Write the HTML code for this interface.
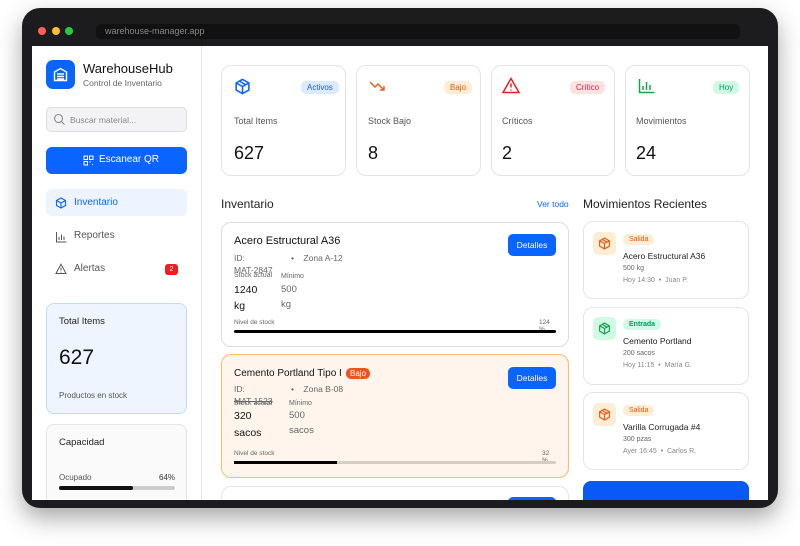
<!DOCTYPE html>
<html><head><meta charset="utf-8"><style>
*{box-sizing:border-box;margin:0;padding:0}
body{width:800px;height:546px;background:#fff;font-family:"Liberation Sans",sans-serif;position:relative;overflow:hidden;color:#111}
.a{position:absolute}
.frame{left:22px;top:8px;width:756px;height:500px;background:#1c1c1e;border-radius:18px;box-shadow:0 10px 24px rgba(0,0,0,.35)}
.screen{left:32px;top:46px;width:736px;height:454px;background:#fff;overflow:hidden}
.card{border:1px solid #e5e5e5;border-radius:10px;background:#fff}
.badge{font-size:8px;padding:2px 6px;border-radius:5px}
.lab{font-size:9px;color:#555}
.sm{font-size:8px;color:#666}
</style></head><body>
<div class="a frame"></div>
<div class="a" style="left:38px;top:27px;width:8px;height:8px;border-radius:50%;background:#ff5f57"></div>
<div class="a" style="left:52px;top:27px;width:8px;height:8px;border-radius:50%;background:#febc2e"></div>
<div class="a" style="left:65px;top:27px;width:8px;height:8px;border-radius:50%;background:#28c840"></div>
<div class="a" style="left:96px;top:24px;width:644px;height:15px;border-radius:5px;background:#111;color:#888;font-size:9px;padding:2px 9px">warehouse-manager.app</div>
<div class="a screen">
 <div class="a" style="left:0;top:0;width:170px;height:454px;border-right:1px solid #e6e6e6;background:#fff"></div>
 <div class="a" style="left:14px;top:14px;width:29px;height:29px;border-radius:7px;background:#0a64ff">
  <svg width="29" height="29" viewBox="0 0 29 29"><path d="M8.5 12 L14.5 8.5 L20.5 12 V20.5 H8.5Z M11 14h7 M11 16.5h7 M11 19h7" fill="none" stroke="#fff" stroke-width="1.4"/></svg></div>
 <div class="a" style="left:51px;top:15px;font-size:13px;color:#111">WarehouseHub</div>
 <div class="a" style="left:51px;top:32px;font-size:8.5px;color:#666">Control de Inventario</div>
 <div class="a" style="left:14px;top:61px;width:141px;height:25px;border:1px solid #ddd;border-radius:5px;background:#f3f3f5"></div>
 <svg class="a" style="left:21px;top:67px" width="13" height="13" viewBox="0 0 13 13"><circle cx="5.5" cy="5.5" r="4" fill="none" stroke="#888" stroke-width="1.1"/><path d="M8.5 8.5l3 3" stroke="#888" stroke-width="1.1"/></svg>
 <div class="a" style="left:38px;top:69px;font-size:8.5px;color:#888">Buscar material...</div>
 <div class="a" style="left:14px;top:101px;width:141px;height:27px;border-radius:6px;background:#0a64ff"></div>
 <div class="a" style="left:67px;top:108px;color:#fff;font-size:10px">Escanear QR</div>
 <svg class="a" style="left:51px;top:109px" width="11" height="11" viewBox="0 0 11 11" fill="none" stroke="#fff" stroke-width="1"><rect x="1" y="1" width="3.5" height="3.5"/><rect x="6.5" y="1" width="3.5" height="3.5"/><rect x="1" y="6.5" width="3.5" height="3.5"/><path d="M6.5 7h1.5M9 9.5h1"/></svg>
 <div class="a" style="left:14px;top:143px;width:141px;height:27px;border-radius:6px;background:#eef4ff"></div>
 <svg class="a" style="left:23px;top:151px" width="12" height="12" viewBox="0 0 12 12" fill="none" stroke="#0a64ff" stroke-width="1.1"><path d="M6 1l4.5 2.5v5L6 11 1.5 8.5v-5Z M1.5 3.5L6 6l4.5-2.5 M6 6v5"/></svg>
 <div class="a" style="left:42px;top:151px;font-size:10px;color:#0a64ff">Inventario</div>
 <svg class="a" style="left:23px;top:185px" width="12" height="12" viewBox="0 0 12 12" fill="none" stroke="#555" stroke-width="1"><path d="M1.5 1v10h10M4 9V6M6.5 9V3.5M9 9V5.5"/></svg>
 <div class="a" style="left:42px;top:184px;font-size:10px;color:#555">Reportes</div>
 <svg class="a" style="left:23px;top:217px" width="12" height="12" viewBox="0 0 12 12" fill="none" stroke="#555" stroke-width="1"><path d="M6 1.2L11 10.5H1Z M6 4.5v3M6 8.8v.6"/></svg>
 <div class="a" style="left:42px;top:217px;font-size:10px;color:#555">Alertas</div>
 <div class="a" style="left:133px;top:218px;width:13px;height:11px;border-radius:3px;background:#f01e1e;color:#fff;font-size:7px;text-align:center;line-height:11px">2</div>
 <div class="a" style="left:14px;top:257px;width:141px;height:111px;border:1px solid #bcdcff;border-radius:8px;background:#eef5ff"></div>
 <div class="a" style="left:27px;top:270px;font-size:9.5px;color:#222">Total Items</div>
 <div class="a" style="left:27px;top:300px;font-size:21px;color:#111">627</div>
 <div class="a" style="left:27px;top:345px;font-size:8px;color:#555">Productos en stock</div>
 <div class="a" style="left:14px;top:378px;width:141px;height:90px;border:1px solid #e5e5e5;border-radius:8px;background:#fafafa"></div>
 <div class="a" style="left:27px;top:391px;font-size:9.5px;color:#222">Capacidad</div>
 <div class="a" style="left:27px;top:427px;font-size:8px;color:#555">Ocupado</div>
 <div class="a" style="left:127px;top:427px;font-size:8px;color:#333">64%</div>
 <div class="a" style="left:27px;top:440px;width:116px;height:4px;border-radius:2px;background:#ccc"><div style="width:64%;height:4px;border-radius:2px;background:#111"></div></div>

 <div class="a card" style="left:189px;top:19px;width:125px;height:111px"></div>
 <div class="a card" style="left:324px;top:19px;width:125px;height:111px"></div>
 <div class="a card" style="left:459px;top:19px;width:124px;height:111px"></div>
 <div class="a card" style="left:593px;top:19px;width:125px;height:111px"></div>
 <svg class="a" style="left:202px;top:32px" width="17" height="17" viewBox="0 0 12 12" fill="none" stroke="#0a64ff" stroke-width="1.1"><path d="M6 1l4.5 2.5v5L6 11 1.5 8.5v-5Z M1.5 3.5L6 6l4.5-2.5 M6 6v5 M3.8 2.2l4.5 2.6"/></svg>
 <div class="a badge" style="left:269px;top:35px;background:#dbeafe;color:#1d5fe0">Activos</div>
 <svg class="a" style="left:337px;top:34px" width="18" height="12" viewBox="0 0 18 12" fill="none" stroke="#f25a12" stroke-width="1.4"><path d="M1 2l5 5 3-3 6 6M11 10h4V6"/></svg>
 <div class="a badge" style="left:412px;top:35px;background:#ffedd5;color:#ea580c">Bajo</div>
 <svg class="a" style="left:470px;top:31px" width="18" height="17" viewBox="0 0 18 17" fill="none" stroke="#ee1c1c" stroke-width="1.5"><path d="M9 1.5L17 15.5H1Z M9 6.5v4M9 12.5v1"/></svg>
 <div class="a badge" style="left:538px;top:35px;background:#fde2e2;color:#e11d48">Crítico</div>
 <svg class="a" style="left:606px;top:32px" width="17" height="16" viewBox="0 0 17 16" fill="none" stroke="#16a34a" stroke-width="1.5"><path d="M1.5 1v13.5h15M5 12V8M8.5 12V4M12 12V7"/></svg>
 <div class="a badge" style="left:681px;top:35px;background:#d1fae5;color:#059669">Hoy</div>
 <div class="a lab" style="left:202px;top:70px">Total Items</div>
 <div class="a lab" style="left:336px;top:70px">Stock Bajo</div>
 <div class="a lab" style="left:470px;top:70px">Críticos</div>
 <div class="a lab" style="left:604px;top:70px">Movimientos</div>
 <div class="a" style="left:202px;top:97px;font-size:18px">627</div>
 <div class="a" style="left:336px;top:97px;font-size:18px">8</div>
 <div class="a" style="left:470px;top:97px;font-size:18px">2</div>
 <div class="a" style="left:604px;top:97px;font-size:18px">24</div>

 <div class="a" style="left:189px;top:151px;font-size:12px;color:#222">Inventario</div>
 <div class="a" style="left:505px;top:153px;font-size:8.5px;color:#0a64ff">Ver todo</div>

 <div class="a card" style="left:189px;top:176px;width:348px;height:125px;border-color:#ddd"></div>
 <div class="a" style="left:202px;top:189px;font-size:11px;color:#111">Acero Estructural A36</div>
 <div class="a" style="left:476px;top:188px;width:48px;height:22px;border-radius:5px;background:#0a64ff;color:#fff;font-size:8.5px;text-align:center;line-height:22px">Detalles</div>
 <div class="a sm" style="left:202px;top:207px;font-size:8.5px">ID:</div>
 <div class="a sm" style="left:202px;top:219px;font-size:8.5px">MAT-2847</div>
 <div class="a sm" style="left:259px;top:207px;font-size:8.5px">•&nbsp;&nbsp;&nbsp;&nbsp;Zona A-12</div>
 <div class="a sm" style="left:202px;top:226px;font-size:7px">Stock actual</div>
 <div class="a sm" style="left:249px;top:227px;font-size:7px">Mínimo</div>
 <div class="a" style="left:202px;top:236px;font-size:10.5px;line-height:16px">1240<br>kg</div>
 <div class="a" style="left:249px;top:236px;font-size:9.5px;line-height:15px;color:#666">500<br>kg</div>
 <div class="a sm" style="left:202px;top:273px;font-size:6.5px">Nivel de stock</div>
 <div class="a sm" style="left:507px;top:273px;font-size:6.5px">124<br>%</div>
 <div class="a" style="left:202px;top:284px;width:322px;height:3px;background:#000;border-radius:2px"></div>

 <div class="a card" style="left:189px;top:308px;width:348px;height:124px;border-color:#f9bc6a;background:#fff5ec"></div>
 <div class="a" style="left:202px;top:322px;font-size:10px;color:#111">Cemento Portland Tipo I</div>
 <div class="a badge" style="left:314px;top:322px;background:#f4511e;color:#fff;padding:1px 4px">Bajo</div>
 <div class="a" style="left:476px;top:321px;width:48px;height:22px;border-radius:5px;background:#0a64ff;color:#fff;font-size:8.5px;text-align:center;line-height:22px">Detalles</div>
 <div class="a sm" style="left:202px;top:338px;font-size:8.5px">ID:</div>
 <div class="a sm" style="left:202px;top:350px;font-size:8.5px;text-decoration:line-through">MAT-1523</div>
 <div class="a sm" style="left:259px;top:338px;font-size:8.5px">•&nbsp;&nbsp;&nbsp;&nbsp;Zona B-08</div>
 <div class="a sm" style="left:202px;top:354px;font-size:7px">Stock actual</div>
 <div class="a sm" style="left:257px;top:354px;font-size:7px">Mínimo</div>
 <div class="a" style="left:202px;top:362px;font-size:10.5px;line-height:17px">320<br>sacos</div>
 <div class="a" style="left:257px;top:362px;font-size:9.5px;line-height:15px;color:#666">500<br>sacos</div>
 <div class="a sm" style="left:202px;top:404px;font-size:6.5px">Nivel de stock</div>
 <div class="a sm" style="left:510px;top:404px;font-size:6.5px">32<br>%</div>
 <div class="a" style="left:202px;top:415px;width:322px;height:3px;background:#d6cdc6;border-radius:2px"><div style="width:32%;height:3px;background:#000"></div></div>

 <div class="a card" style="left:189px;top:440px;width:348px;height:40px"></div>
 <div class="a" style="left:476px;top:451px;width:48px;height:22px;border-radius:5px;background:#0a64ff"></div>

 <div class="a" style="left:551px;top:151px;font-size:12px;color:#222">Movimientos Recientes</div>
 <div class="a card" style="left:551px;top:175px;width:166px;height:78px"></div>
 <div class="a card" style="left:551px;top:261px;width:166px;height:78px"></div>
 <div class="a card" style="left:551px;top:346px;width:166px;height:78px"></div>
 <div class="a" style="left:561px;top:186px;width:23px;height:23px;border-radius:5px;background:#ffedd5"></div>
 <div class="a" style="left:561px;top:271px;width:23px;height:23px;border-radius:5px;background:#d1fae5"></div>
 <div class="a" style="left:561px;top:357px;width:23px;height:23px;border-radius:5px;background:#ffedd5"></div>
 <svg class="a" style="left:566px;top:191px" width="13" height="13" viewBox="0 0 12 12" fill="none" stroke="#f25a12" stroke-width="1.1"><path d="M6 1l4.5 2.5v5L6 11 1.5 8.5v-5Z M1.5 3.5L6 6l4.5-2.5 M6 6v5 M3.8 2.2l4.5 2.6"/></svg>
 <svg class="a" style="left:566px;top:276px" width="13" height="13" viewBox="0 0 12 12" fill="none" stroke="#16a34a" stroke-width="1.1"><path d="M6 1l4.5 2.5v5L6 11 1.5 8.5v-5Z M1.5 3.5L6 6l4.5-2.5 M6 6v5 M3.8 2.2l4.5 2.6"/></svg>
 <svg class="a" style="left:566px;top:362px" width="13" height="13" viewBox="0 0 12 12" fill="none" stroke="#f25a12" stroke-width="1.1"><path d="M6 1l4.5 2.5v5L6 11 1.5 8.5v-5Z M1.5 3.5L6 6l4.5-2.5 M6 6v5 M3.8 2.2l4.5 2.6"/></svg>
 <div class="a badge" style="left:591px;top:188px;background:#ffedd5;color:#ea580c;font-size:7px">Salida</div>
 <div class="a badge" style="left:591px;top:273px;background:#d1fae5;color:#059669;font-size:7px;font-weight:bold">Entrada</div>
 <div class="a badge" style="left:591px;top:359px;background:#ffedd5;color:#ea580c;font-size:7px">Salida</div>
 <div class="a" style="left:591px;top:205px;font-size:8.5px;color:#222">Acero Estructural A36</div>
 <div class="a" style="left:591px;top:290px;font-size:8.5px;color:#222">Cemento Portland</div>
 <div class="a" style="left:591px;top:376px;font-size:8.5px;color:#222">Varilla Corrugada #4</div>
 <div class="a sm" style="left:591px;top:219px;font-size:7px">500 kg</div>
 <div class="a sm" style="left:591px;top:304px;font-size:7px">200 sacos</div>
 <div class="a sm" style="left:591px;top:390px;font-size:7px">300 pzas</div>
 <div class="a sm" style="left:591px;top:231px;font-size:7px;color:#888">Hoy 14:30 &nbsp;•&nbsp; Juan P.</div>
 <div class="a sm" style="left:591px;top:316px;font-size:7px;color:#888">Hoy 11:15 &nbsp;•&nbsp; María G.</div>
 <div class="a sm" style="left:591px;top:402px;font-size:7px;color:#888">Ayer 16:45 &nbsp;•&nbsp; Carlos R.</div>
 <div class="a" style="left:551px;top:435px;width:166px;height:40px;border-radius:8px;background:#0a58f5"></div>
</div>
</body></html>
